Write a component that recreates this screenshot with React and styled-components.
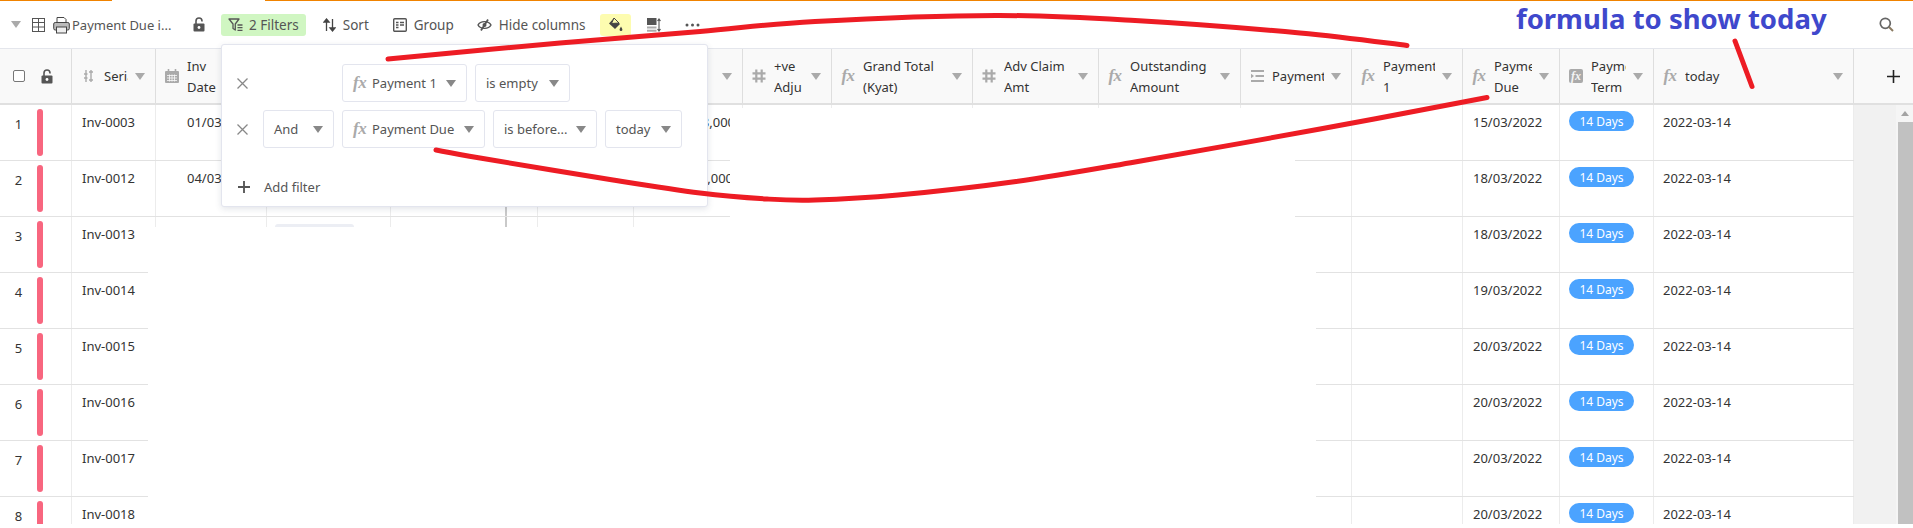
import React from "react";
import styled, { createGlobalStyle } from "styled-components";

const UI_FONT = `"Noto Sans", "Open Sans", "Liberation Sans", sans-serif`;

const Global = createGlobalStyle`
  html, body { margin: 0; padding: 0; background: #fff; }
  body { font-family: ${UI_FONT}; font-size: 13px; color: #333; }
`;

const COLS = "72px 84px 111px 124px 116px 31px 96px 109px 89px 141px 126px 142px 111px 111px 97px 94px 200px";

const Page = styled.div`
  position: relative;
  width: 1913px;
  height: 528px;
  overflow: hidden;
  background: #fff;
`;
const TopLine = styled.div`
  display: flex;
  height: 1px;
  gap: 153px;
`;
const TopSeg = styled.div`
  background: #f08300;
  width: ${(p) => (p.$w ? p.$w + "px" : "auto")};
  flex: ${(p) => (p.$w ? "none" : "1")};
`;
const Toolbar = styled.div`
  display: flex;
  align-items: center;
  height: 47px;
  padding: 0 19px 0 11px;
  color: #555;
  box-sizing: border-box;
`;
const Caret = styled.span`
  width: 0;
  height: 0;
  border-left: 5px solid transparent;
  border-right: 5px solid transparent;
  border-top: 7px solid ${(p) => p.$c || "#aaa"};
  flex: none;
`;
const ViewName = styled.span`
  font-size: 13px;
  width: 116px;
  margin-left: 2px;
  white-space: nowrap;
`;
const ToolBtn = styled.div`
  display: flex;
  align-items: center;
  gap: ${(p) => p.$gap ?? 7}px;
  height: 22px;
  margin-left: ${(p) => p.$ml ?? 0}px;
  padding: 0 ${(p) => p.$px ?? 0}px;
  border-radius: 3px;
  background: ${(p) => p.$bg || "transparent"};
  font-size: 13.5px;
  white-space: nowrap;
  flex: none;
`;
const Spacer = styled.div`flex: 1;`;

const Grid = styled.div`
  display: flex;
  height: 476px;
  overflow: hidden;
`;
const Table = styled.div`
  width: 1854px;
  flex: none;
`;
const HeadRow = styled.div`
  display: grid;
  grid-template-columns: ${COLS};
  height: 57px;
  box-sizing: border-box;
  background: #f9f9f9;
  border-top: 1px solid #e4e6ec;
  border-bottom: 2px solid #e0e0e0;
`;
const HeadCell = styled.div`
  display: flex;
  align-items: center;
  box-sizing: border-box;
  padding: 0 10px 0 9px;
  border-right: 1px solid #dedede;
  min-width: 0;
  color: #333;
`;
const CheckCell = styled(HeadCell)`
  padding: 0 0 0 13px;
  gap: 16px;
`;
const Check = styled.span`
  width: 12px;
  height: 12px;
  box-sizing: border-box;
  border: 1px solid #777;
  border-radius: 2px;
  background: #fff;
  flex: none;
`;
const IconSlot = styled.span`
  width: 14px;
  flex: none;
  display: flex;
  justify-content: center;
  align-items: center;
  margin-right: ${(p) => p.$mr ?? 8}px;
`;
const Fx = styled.span`
  font-family: "Liberation Serif", serif;
  font-style: italic;
  font-weight: 700;
  font-size: 17px;
  line-height: 16px;
  color: #aaa;
  letter-spacing: -0.5px;
  white-space: nowrap;
`;
const FxBox = styled.span`
  width: 14px;
  height: 14px;
  background: #aaa;
  border-radius: 2px;
  color: #f4f4f4;
  font-family: "Liberation Serif", serif;
  font-style: italic;
  font-weight: 700;
  font-size: 12px;
  line-height: 14px;
  text-align: center;
`;
const HeadLabel = styled.div`
  flex: 1;
  min-width: 0;
  overflow: hidden;
  line-height: 20.5px;
  padding-top: 1px;
  margin-right: 7px;
  white-space: pre-line;
`;
const Row = styled.div`
  display: grid;
  grid-template-columns: ${COLS};
  height: 56px;
  box-sizing: border-box;
  border-bottom: 1px solid #e2e2e2;
`;
const Cell = styled.div`
  box-sizing: border-box;
  padding: 7px 0 0 ${(p) => p.$pl ?? 10}px;
  border-right: ${(p) => (p.$frozen ? "2px solid #c9c9c9" : "1px solid #ececec")};
  line-height: 20px;
  white-space: nowrap;
  overflow: hidden;
  color: #333;
  min-width: 0;
`;
const IndexCell = styled(Cell)`
  display: flex;
  padding: 4px 0 0 0;
`;
const RowNo = styled.span`
  width: 37px;
  text-align: center;
  padding-top: 5px;
`;
const ColorBar = styled.span`
  width: 6px;
  height: 47px;
  border-radius: 3px;
  background: #f8667f;
`;
const Chip = styled.span`
  display: inline-block;
  width: 79px;
  height: 24px;
  border-radius: 3px;
  background: #eceef4;
`;
const Pill = styled.span`
  display: block;
  width: 65px;
  height: 20px;
  margin-top: -1px;
  border-radius: 10px;
  background: #4ba3ff;
  color: #fff;
  font-size: 12px;
  line-height: 21px;
  text-align: center;
`;
const Side = styled.div`
  flex: 1;
  display: flex;
  flex-direction: column;
`;
const AddCol = styled.div`
  height: 57px;
  box-sizing: border-box;
  display: flex;
  align-items: center;
  justify-content: flex-end;
  padding-right: 13px;
  background: #f9f9f9;
  border-top: 1px solid #e4e6ec;
  border-bottom: 2px solid #e0e0e0;
`;
const ScrollZone = styled.div`
  flex: 1;
  display: flex;
  justify-content: flex-end;
  background: #f1f1f1;
`;
const ScrollBar = styled.div`
  width: 17px;
  display: flex;
  flex-direction: column;
  align-items: flex-end;
  background: #f5f5f5;
`;
const ScrollBtn = styled.div`
  height: 17px;
  width: 17px;
  display: flex;
  align-items: center;
  justify-content: center;
  &::before {
    content: "";
    border-left: 4px solid transparent;
    border-right: 4px solid transparent;
    border-bottom: 5px solid #a3a3a3;
  }
`;
const Thumb = styled.div`
  width: 15px;
  flex: 1;
  background: #c1c1c1;
`;

const Popup = styled.div`
  position: absolute;
  left: 221px;
  top: 44px;
  width: 487px;
  height: 163px;
  box-sizing: border-box;
  padding: 19px 0 0 15px;
  background: #fff;
  border: 1px solid #e3e5ee;
  border-radius: 3px;
  box-shadow: 0 2px 6px rgba(60, 70, 100, 0.14);
  color: #555;
`;
const FilterRow = styled.div`
  display: flex;
  align-items: center;
  gap: 8px;
  height: 38px;
  margin-bottom: 8px;
`;
const Close = styled.span`
  width: 18px;
  flex: none;
  display: flex;
`;
const Slot = styled.span`
  width: 71px;
  flex: none;
`;
const Select = styled.div`
  display: flex;
  align-items: center;
  width: ${(p) => p.$w}px;
  height: 38px;
  box-sizing: border-box;
  padding: 0 10px;
  border: 1px solid #e3e5ee;
  border-radius: 3px;
  white-space: nowrap;
  flex: none;
`;
const SelectFx = styled.span`
  width: 18px;
  margin-right: 1px;
  flex: none;
`;
const SelectText = styled.span`
  flex: 1;
  min-width: 0;
`;
const AddFilter = styled.div`
  display: flex;
  align-items: center;
  gap: 14px;
  margin-top: 30px;
  padding-left: 1px;
`;
const Mask = styled.div`
  position: absolute;
  left: ${(p) => p.$x}px;
  top: ${(p) => p.$y}px;
  width: ${(p) => p.$w}px;
  height: ${(p) => p.$h}px;
  background: #fff;
`;
const Scribbles = styled.svg`
  position: absolute;
  left: 0;
  top: 0;
  pointer-events: none;
`;
const Note = styled.div`
  position: absolute;
  left: 1516px;
  top: 1px;
  font-family: "Noto Sans", sans-serif;
  font-weight: 700;
  font-size: 27.5px;
  line-height: 36px;
  color: #3f48cc;
  white-space: nowrap;
`;

const Ic = ({ w = 14, h = 14, vb = "0 0 14 14", children, ...r }) => (
  <svg width={w} height={h} viewBox={vb} fill="none" style={{ flex: "none", display: "block" }} {...r}>{children}</svg>
);
const TableIcon = () => (
  <Ic w={13} h={14} vb="0 0 13 14"><rect x=".5" y=".5" width="12" height="13" stroke="#555" /><path d="M.5 4.5h12M.5 9h12M6.5.5v13" stroke="#555" /></Ic>
);
const PrinterIcon = () => (
  <Ic w={17} h={18} vb="0 0 17 18">
    <path d="M4 7V1.5h7l2 2V7" fill="#fff" stroke="#444" />
    <rect x=".7" y="6.5" width="15.6" height="7.5" rx="1.5" fill="#bbb" stroke="#444" />
    <rect x="3.5" y="11" width="10" height="6" fill="#eee" stroke="#444" />
  </Ic>
);
const LockIcon = ({ c = "#555" }) => (
  <Ic w={12} h={15} vb="0 0 12 15">
    <path d="M3 7V4a3 3 0 0 1 6 0v.5" stroke={c} strokeWidth="1.6" />
    <rect x="0.5" y="6.5" width="11" height="8" rx="1" fill={c} />
    <circle cx="6" cy="10.5" r="1.4" fill="#fff" />
  </Ic>
);
const FilterIcon = () => (
  <Ic w={15} h={14} vb="0 0 15 14">
    <path d="M1 1h10L7.3 6v6L5 10.5V6z" stroke="#555" strokeWidth="1.3" strokeLinejoin="round" />
    <path d="M9.5 7h5M9.5 9.7h5M9.5 12.4h5" stroke="#555" strokeWidth="1.3" />
  </Ic>
);
const SortIcon = () => (
  <Ic w={13} h={14} vb="0 0 13 14">
    <path d="M3.5 1v12M6 4L3.5 1 1 4z" stroke="#444" strokeWidth="1.3" fill="#444" />
    <path d="M9.5 13V1M7 10h5l-2.5 3z" stroke="#444" strokeWidth="1.3" fill="#444" />
  </Ic>
);
const GroupIcon = () => (
  <Ic w={14} h={14}>
    <rect x=".7" y=".7" width="12.6" height="12.6" rx="1" stroke="#555" strokeWidth="1.4" />
    <path d="M3 4.5h2.5M7 4.5h4M3 7h2.5M7 7h4M3 9.5h2.5" stroke="#555" strokeWidth="1.5" />
  </Ic>
);
const HideIcon = () => (
  <Ic w={15} h={12} vb="0 0 15 12">
    <path d="M1 6c2.5-4.5 10.500-4.500 13 0-2.500 4.500-10.500 4.500-13 0z" stroke="#555" strokeWidth="1.4" />
    <circle cx="7.500" cy="6" r="2" fill="#555" />
    <path d="M11 .5L4 11.500" stroke="#555" strokeWidth="1.800" />
  </Ic>
);
const PaintIcon = () => (
  <Ic w={15} h={15} vb="0 0 15 15">
    <path d="M6 1l6 6-5 5-6-5.500z" fill="#444" />
    <path d="M3.500 6.500L6 1l5 5z" fill="#fdfcb0" stroke="#444" />
    <path d="M13 9.500c1 1.800 1.400 2.500 1.400 3.200a1.400 1.400 0 0 1-2.800 0c0-.7.400-1.400 1.400-3.200z" fill="#444" />
  </Ic>
);
const RowHeightIcon = () => (
  <Ic w={14} h={14}>
    <rect x="0" y="0" width="9.500" height="7" fill="#555" />
    <rect x="0" y="8.500" width="9.500" height="2" fill="#aaa" />
    <rect x="0" y="11.700" width="9.500" height="2" fill="#aaa" />
    <path d="M12 1v12M10.500 3L12 1l1.500 2M10.500 11l1.500 2 1.500-2" stroke="#555" strokeWidth="1.100" />
  </Ic>
);
const DotsIcon = () => (
  <Ic w={15} h={4} vb="0 0 15 4">
    <circle cx="2" cy="2" r="1.500" fill="#555" /><circle cx="7.500" cy="2" r="1.500" fill="#555" /><circle cx="13" cy="2" r="1.500" fill="#555" />
  </Ic>
);
const SearchIcon = () => (
  <Ic w={15} h={15} vb="0 0 15 15"><circle cx="6.300" cy="6.300" r="5" stroke="#666" strokeWidth="1.700" /><path d="M10 10l4 4" stroke="#8a7a60" strokeWidth="2" /></Ic>
);
const SerialIcon = () => (
  <Ic w={9} h={14} vb="0 0 9 14">
    <path d="M2 1v12M7 1v12M0 5h3.500M0 9h3.500M5 3h4M5 11h4" stroke="#aaa" strokeWidth="1.400" />
  </Ic>
);
const CalendarIcon = () => (
  <Ic w={14} h={14}>
    <path d="M1 2h12a1 1 0 0 1 1 1v10a1 1 0 0 1-1 1H1a1 1 0 0 1-1-1V3a1 1 0 0 1 1-1z" fill="#aaa" />
    <path d="M3.500 0v3M10.500 0v3" stroke="#aaa" strokeWidth="1.600" />
    <path d="M2 6.500h10M2 9h10M2 11.500h10M4.500 5.500v7M7 5.500v7M9.500 5.500v7" stroke="#f9f9f9" strokeWidth=".8" />
  </Ic>
);
const HashIcon = () => (
  <Ic w={14} h={14}><path d="M4.300 0.500v13M9.700 0.500v13M0.500 4.300h13M0.500 9.700h13" stroke="#aaa" strokeWidth="2.200" /></Ic>
);
const ListIcon = () => (
  <Ic w={13} h={12} vb="0 0 13 12">
    <path d="M0 1h13M4.500 6H13M0 11h13" stroke="#aaa" strokeWidth="1.800" />
    <path d="M0 3.800L3 6 0 8.200z" fill="#aaa" />
  </Ic>
);
const PlusIcon = ({ c = "#222", s = 13, sw = 1.600 }) => (
  <Ic w={s} h={s} vb="0 0 13 13"><path d="M6.500 0v13M0 6.500h13" stroke={c} strokeWidth={sw} /></Ic>
);
const CloseIcon = () => (
  <Ic w={11} h={11} vb="0 0 11 11"><path d="M.5.500l10 10M10.500.500l-10 10" stroke="#888" strokeWidth="1.300" /></Ic>
);

const ICONS = {
  serial: <SerialIcon />, cal: <CalendarIcon />, hash: <HashIcon />, fx: <Fx>fx</Fx>,
  list: <ListIcon />, fxbox: <FxBox>fx</FxBox>,
};

const HEADS = [
  { icon: "serial", label: "Serial", mr: 9 },
  { icon: "cal", label: "Inv\nDate" },
  {}, {}, {}, {},
  { arrow: true },
  { icon: "hash", label: "+ve Adju" },
  { icon: "fx", label: "Grand Total\n(Kyat)" },
  { icon: "hash", label: "Adv Claim\nAmt" },
  { icon: "fx", label: "Outstanding\nAmount" },
  { icon: "list", label: "Payment" },
  { icon: "fx", label: "Payment\n1" },
  { icon: "fx", label: "Payment\nDue" },
  { icon: "fxbox", label: "Payment\nTerm" },
  { icon: "fx", label: "today" },
];

const ROWS = [
  { n: 1, id: "Inv-0003", inv: "01/03/2022", amt: "1,358,000", pl: 42, due: "15/03/2022" },
  { n: 2, id: "Inv-0012", inv: "04/03/2022", amt: "1,250,000", pl: 40, due: "18/03/2022" },
  { n: 3, id: "Inv-0013", due: "18/03/2022", chip: true },
  { n: 4, id: "Inv-0014", due: "19/03/2022" },
  { n: 5, id: "Inv-0015", due: "20/03/2022" },
  { n: 6, id: "Inv-0016", due: "20/03/2022" },
  { n: 7, id: "Inv-0017", due: "20/03/2022" },
  { n: 8, id: "Inv-0018", due: "20/03/2022" },
];

const Filter = ({ fx, w, children }) => (
  <Select $w={w}>
    {fx && <SelectFx><Fx>fx</Fx></SelectFx>}
    <SelectText>{children}</SelectText>
    <Caret $c="#888" />
  </Select>
);

const pts = (l) => l.map((p, i) => (i ? "L" : "M") + p[0] + " " + p[1]).join(" ");
const smooth = (l) => {
  let d = `M${l[0][0]} ${l[0][1]}`;
  for (let i = 0; i < l.length - 1; i++) {
    const p0 = l[Math.max(i - 1, 0)], p1 = l[i], p2 = l[i + 1], p3 = l[Math.min(i + 2, l.length - 1)];
    d += ` C${p1[0] + (p2[0] - p0[0]) / 6} ${p1[1] + (p2[1] - p0[1]) / 6} ${p2[0] - (p3[0] - p1[0]) / 6} ${p2[1] - (p3[1] - p1[1]) / 6} ${p2[0]} ${p2[1]}`;
  }
  return d;
};
const STROKE1 = [[388, 59], [560, 43], [700, 31.5], [815, 21.5], [996, 15.5], [1135, 20.5], [1300, 33], [1407, 45.5]];
const STROKE2 = [[436, 150], [480, 158], [613, 180], [700, 193], [767, 199], [815, 200], [898, 195], [1016, 181.5], [1135, 162], [1320, 129], [1487, 97.5]];
const STROKE3 = [[1735, 41], [1752, 86.5]];

export default function App() {
  return (
    <Page>
      <Global />
      <TopLine><TopSeg $w={112} /><TopSeg /></TopLine>
      <Toolbar>
        <Caret />
        <ToolBtn $ml={11}><TableIcon /></ToolBtn>
        <ToolBtn $ml={8}><PrinterIcon /></ToolBtn>
        <ViewName>Payment Due i...</ViewName>
        <ToolBtn $ml={5}><LockIcon /></ToolBtn>
        <ToolBtn $ml={16} $bg="#d0f6c2" $px={7} $gap={6}><FilterIcon /><span>2 Filters</span></ToolBtn>
        <ToolBtn $ml={17}><SortIcon /><span>Sort</span></ToolBtn>
        <ToolBtn $ml={24}><GroupIcon /><span>Group</span></ToolBtn>
        <ToolBtn $ml={23}><HideIcon /><span>Hide columns</span></ToolBtn>
        <ToolBtn $ml={14} $bg="#fdfcb0" $px={8}><PaintIcon /></ToolBtn>
        <ToolBtn $ml={16}><RowHeightIcon /></ToolBtn>
        <ToolBtn $ml={24}><DotsIcon /></ToolBtn>
        <Spacer />
        <SearchIcon />
      </Toolbar>
      <Grid>
        <Table>
          <HeadRow>
            <CheckCell><Check /><LockIcon /></CheckCell>
            {HEADS.map((h, i) => (
              <HeadCell key={i}>
                {h.icon && <IconSlot $mr={h.mr}>{ICONS[h.icon]}</IconSlot>}
                <HeadLabel>{h.label}</HeadLabel>
                {(h.icon || h.arrow) && <Caret />}
              </HeadCell>
            ))}
          </HeadRow>
          {ROWS.map((r) => (
            <Row key={r.n}>
              <IndexCell><RowNo>{r.n}</RowNo><ColorBar /></IndexCell>
              <Cell>{r.id}</Cell>
              <Cell $pl={31}>{r.inv}</Cell>
              <Cell $pl={8}>{r.chip && <Chip />}</Cell>
              <Cell $frozen />
              <Cell />
              <Cell />
              <Cell $pl={r.pl}>{r.amt}</Cell>
              <Cell /><Cell /><Cell /><Cell /><Cell /><Cell />
              <Cell>{r.due}</Cell>
              <Cell $pl={9}><Pill>14 Days</Pill></Cell>
              <Cell $pl={9}>2022-03-14</Cell>
            </Row>
          ))}
        </Table>
        <Side>
          <AddCol><PlusIcon /></AddCol>
          <ScrollZone>
            <ScrollBar><ScrollBtn /><Thumb /></ScrollBar>
          </ScrollZone>
        </Side>
      </Grid>

      <Mask $x={730} $y={108} $w={565} $h={119} />
      <Mask $x={148} $y={227} $w={1168} $h={301} />
      <Mask $x={0} $y={524} $w={1913} $h={4} />

      <Popup>
        <FilterRow>
          <Close><CloseIcon /></Close>
          <Slot />
          <Filter fx w={125}>Payment 1</Filter>
          <Filter w={95}>is empty</Filter>
        </FilterRow>
        <FilterRow>
          <Close><CloseIcon /></Close>
          <Filter w={71}>And</Filter>
          <Filter fx w={143}>Payment Due</Filter>
          <Filter w={104}>is before...</Filter>
          <Filter w={77}>today</Filter>
        </FilterRow>
        <AddFilter><PlusIcon c="#555" s={12} sw={2} /><span>Add filter</span></AddFilter>
      </Popup>

      <Scribbles width="1913" height="528" viewBox="0 0 1913 528" fill="none" stroke="#ed1c24" strokeWidth="5" strokeLinecap="round">
        <path d={smooth(STROKE1)} />
        <path d={smooth(STROKE2)} />
        <path d={pts(STROKE3)} />
      </Scribbles>
      <Note>formula to show today</Note>
    </Page>
  );
}
